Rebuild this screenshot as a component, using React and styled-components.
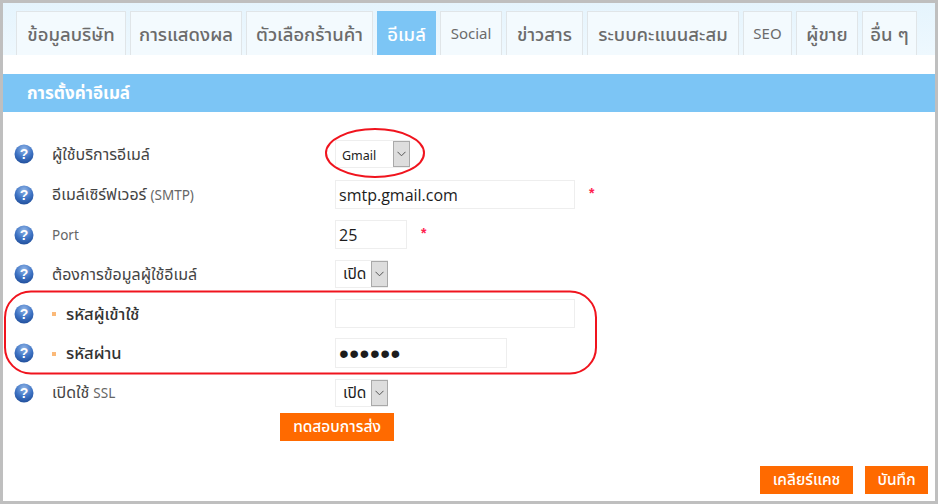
import React from "react";
import styled, { createGlobalStyle } from "styled-components";

const GlobalStyle = createGlobalStyle`
  html, body {
    margin: 0;
    padding: 0;
    background: #fff;
  }
  body {
    font-family: "Noto Sans Thai", "Open Sans", "Noto Sans", "DejaVu Sans", sans-serif;
  }
`;

const Frame = styled.div`
  position: relative;
  box-sizing: border-box;
  width: 938px;
  height: 504px;
  border: 3px solid #bfbfbf;
  background: #fff;
  overflow: hidden;
`;

const TabBar = styled.div`
  display: flex;
  gap: 4px;
  height: 52px;
  box-sizing: border-box;
  padding: 8px 0 0 13px;
  background: linear-gradient(to bottom, #e5f4fd, #eef8fe);
`;

const Tab = styled.div`
  box-sizing: border-box;
  width: ${(p) => p.$w}px;
  height: 44px;
  padding-top: 2px;
  display: flex;
  align-items: center;
  justify-content: center;
  white-space: nowrap;
  font-size: ${(p) => (p.$latin ? 15 : 18.5)}px;
  font-weight: ${(p) => (p.$latin ? 400 : 500)};
  color: ${(p) => (p.$active ? "#fff" : "#6b6b6b")};
  background: ${(p) => (p.$active ? "#7cc5f5" : "#f3fafe")};
  border: 1px solid ${(p) => (p.$active ? "#7cc5f5" : "#e0e5e8")};
  border-bottom: none;
`;

const Heading = styled.h1`
  margin: 19px 0 0;
  height: 38px;
  box-sizing: border-box;
  padding: 1px 0 0 24px;
  display: flex;
  align-items: center;
  font-size: 17px;
  font-weight: 700;
  color: #fff;
  background: #7cc5f5;
`;

const Form = styled.div`
  display: flex;
  flex-direction: column;
  padding-top: 28px;
`;

const Row = styled.div`
  display: flex;
  align-items: center;
  height: ${(p) => p.$h || 29}px;
  margin-bottom: ${(p) => p.$gap ?? 11}px;
  padding-left: 11px;
`;

const Label = styled.div`
  width: 283px;
  margin-left: 18px;
  padding-top: 1px;
  display: flex;
  align-items: center;
  gap: 4px;
  font-size: 16px;
  font-weight: 400;
  color: #444;
  white-space: nowrap;
`;

const Latin = styled.span`
  padding-top: 2px;
  font-size: 13.5px;
  font-weight: 400;
  color: #666;
`;

const Bullet = styled.span`
  width: 4px;
  height: 4px;
  background: #fbb978;
  margin-right: 6px;
`;

const SubLabel = styled.span`
  font-size: 16.5px;
  font-weight: 500;
  color: #333;
`;

const TextInput = styled.input`
  box-sizing: border-box;
  width: ${(p) => p.$w}px;
  height: 100%;
  padding: 1px 3px 0;
  border: 1px solid #eeeeee;
  outline: none;
  font-family: "Open Sans", sans-serif;
  font-size: 16px;
  color: #1c1c1c;
  background: #fff;
`;

const PasswordInput = styled(TextInput)`
  font-family: "Liberation Sans", sans-serif;
  font-size: 28px;
  letter-spacing: 0.5px;
`;

const Required = styled.span`
  color: #ff1f4f;
  font-family: "Liberation Sans", sans-serif;
  font-size: 14px;
  font-weight: 700;
  margin-left: ${(p) => p.$left}px;
  margin-bottom: 3px;
`;

const Select = styled.div`
  box-sizing: border-box;
  width: ${(p) => p.$w}px;
  height: 28px;
  display: flex;
  align-items: center;
  justify-content: space-between;
  padding-left: ${(p) => (p.$latin ? 6 : 7)}px;
  border: 1px solid #eeeeee;
  font-size: ${(p) => (p.$latin ? 12.5 : 15.5)}px;
  font-weight: 400;
  color: #222;
  background: #fff;
`;

const SelectText = styled.span`
  padding-top: ${(p) => (p.$latin ? 5 : 1)}px;
`;

const SelectArrow = styled.span`
  box-sizing: border-box;
  width: 17px;
  height: 26px;
  margin-right: -1px;
  display: flex;
  align-items: center;
  justify-content: center;
  background: #dddddd;
  border: 1px solid #a9a9a9;
`;

const TestRow = styled.div`
  margin: 6px 0 0 277px;
`;

const ActionButton = styled.button`
  box-sizing: border-box;
  height: 28px;
  width: ${(p) => p.$w}px;
  padding: 0;
  border: none;
  background: #ff6a00;
  color: #fff;
  font-family: inherit;
  font-size: 15.5px;
  font-weight: 500;
`;

const Footer = styled.div`
  display: flex;
  justify-content: flex-end;
  gap: 12px;
  margin-top: 25px;
  padding-right: 7px;
`;

const Annotation = styled.svg`
  position: absolute;
  left: -3px;
  top: -3px;
  pointer-events: none;
`;

const HelpIcon = () => (
  <svg width="20" height="20" viewBox="0 0 20 20">
    <defs>
      <radialGradient id="helpFill" cx="50%" cy="25%" r="80%">
        <stop offset="0%" stopColor="#8fb4e6" />
        <stop offset="55%" stopColor="#3f74c4" />
        <stop offset="100%" stopColor="#1d4a96" />
      </radialGradient>
    </defs>
    <circle cx="10" cy="10" r="9.5" fill="url(#helpFill)" />
    <text
      x="10"
      y="15"
      textAnchor="middle"
      fontFamily="Liberation Sans, sans-serif"
      fontSize="14"
      fontWeight="700"
      fill="#fff"
    >
      ?
    </text>
  </svg>
);

const Chevron = () => (
  <svg width="9" height="6" viewBox="0 0 9 6">
    <path d="M0.5 0.8 L4.5 4.8 L8.5 0.8" fill="none" stroke="#555" strokeWidth="1" />
  </svg>
);

const tabs = [
  { label: "ข้อมูลบริษัท", w: 110 },
  { label: "การแสดงผล", w: 112 },
  { label: "ตัวเลือกร้านค้า", w: 127 },
  { label: "อีเมล์", w: 59, active: true },
  { label: "Social", w: 62, latin: true },
  { label: "ข่าวสาร", w: 77 },
  { label: "ระบบคะแนนสะสม", w: 152 },
  { label: "SEO", w: 49, latin: true },
  { label: "ผู้ขาย", w: 62 },
  { label: "อื่น ๆ", w: 55 },
];

function App() {
  return (
    <>
      <GlobalStyle />
      <Frame>
        <TabBar>
          {tabs.map((tab) => (
            <Tab key={tab.label} $w={tab.w} $active={tab.active} $latin={tab.latin}>
              {tab.label}
            </Tab>
          ))}
        </TabBar>
        <Heading>การตั้งค่าอีเมล์</Heading>
        <Form>
          <Row $h={28} $gap={12}>
            <HelpIcon />
            <Label>ผู้ใช้บริการอีเมล์</Label>
            <Select $w={75} $latin>
              <SelectText $latin>Gmail</SelectText>
              <SelectArrow>
                <Chevron />
              </SelectArrow>
            </Select>
          </Row>
          <Row>
            <HelpIcon />
            <Label>
              อีเมล์เซิร์ฟเวอร์ <Latin>(SMTP)</Latin>
            </Label>
            <TextInput $w={240} defaultValue="smtp.gmail.com" />
            <Required $left={14}>*</Required>
          </Row>
          <Row>
            <HelpIcon />
            <Label>
              <Latin>Port</Latin>
            </Label>
            <TextInput $w={72} defaultValue="25" />
            <Required $left={14}>*</Required>
          </Row>
          <Row $h={28}>
            <HelpIcon />
            <Label>ต้องการข้อมูลผู้ใช้อีเมล์</Label>
            <Select $w={53}>
              <SelectText>เปิด</SelectText>
              <SelectArrow>
                <Chevron />
              </SelectArrow>
            </Select>
          </Row>
          <Row $gap={10}>
            <HelpIcon />
            <Label>
              <Bullet />
              <SubLabel>รหัสผู้เข้าใช้</SubLabel>
            </Label>
            <TextInput $w={240} />
          </Row>
          <Row $h={30} $gap={10}>
            <HelpIcon />
            <Label>
              <Bullet />
              <SubLabel>รหัสผ่าน</SubLabel>
            </Label>
            <PasswordInput $w={172} type="password" defaultValue="123456" />
          </Row>
          <Row $gap={0}>
            <HelpIcon />
            <Label>
              เปิดใช้ <Latin>SSL</Latin>
            </Label>
            <Select $w={53}>
              <SelectText>เปิด</SelectText>
              <SelectArrow>
                <Chevron />
              </SelectArrow>
            </Select>
          </Row>
          <TestRow>
            <ActionButton $w={114}>ทดสอบการส่ง</ActionButton>
          </TestRow>
          <Footer>
            <ActionButton $w={93}>เคลียร์แคช</ActionButton>
            <ActionButton $w={63}>บันทึก</ActionButton>
          </Footer>
        </Form>
        {/* red marks drawn over the form */}
        <Annotation width="938" height="504" viewBox="0 0 938 504">
          <ellipse cx="375" cy="153" rx="49" ry="24" fill="none" stroke="#f0141e" strokeWidth="2" />
          <rect x="5" y="291.5" width="591" height="82" rx="26" fill="none" stroke="#f0141e" strokeWidth="2" />
        </Annotation>
      </Frame>
    </>
  );
}

export default App;
